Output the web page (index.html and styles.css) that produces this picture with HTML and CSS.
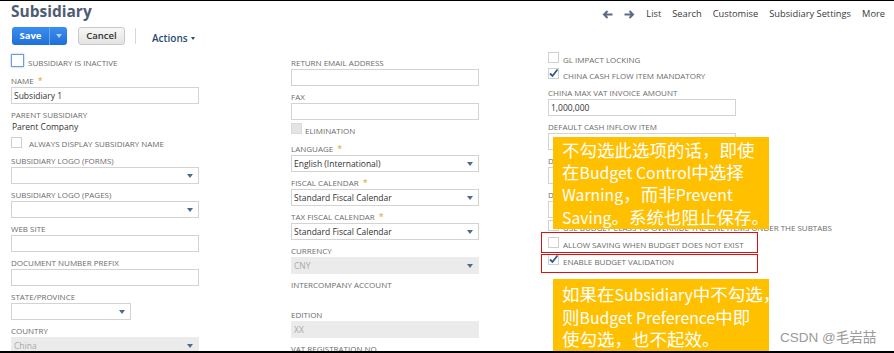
FILE: index.html
```html
<!DOCTYPE html>
<html lang="en">
<head>
    <meta charset="UTF-8">
    <title>Subsidiary</title>
    <link rel="stylesheet" href="styles.css">
</head>
<body>
<div class="page">
    <header class="title-bar">
        <h1>Subsidiary</h1>
        <nav class="record-nav">
            <svg class="nav-arrow" width="11" height="9" viewBox="0 0 11 9"><path d="M10.5 4.5H2 M5.5 1L2 4.5L5.5 8" fill="none" stroke="currentColor" stroke-width="2"/></svg>
            <svg class="nav-arrow" width="11" height="9" viewBox="0 0 11 9"><path d="M0.5 4.5H9 M5.5 1L9 4.5L5.5 8" fill="none" stroke="currentColor" stroke-width="2"/></svg>
            <a>List</a>
            <a>Search</a>
            <a>Customise</a>
            <a>Subsidiary Settings</a>
            <a>More</a>
        </nav>
    </header>

    <div class="toolbar">
        <div class="btn-save">
            <span class="btn-main">Save</span>
            <span class="btn-drop"><i class="tri-light"></i></span>
        </div>
        <div class="btn-cancel">Cancel</div>
        <div class="tool-sep"></div>
        <div class="actions">Actions<i class="tri-dark"></i></div>
    </div>

    <div class="form">
        <div class="col col-main">
            <div class="check check-inactive"><span class="box focus"></span>Subsidiary is inactive</div>
            <div class="field">
                <div class="label">Name<span class="req">*</span></div>
                <div class="input">Subsidiary 1</div>
            </div>
            <div class="label">Parent Subsidiary</div>
            <div class="value">Parent Company</div>
            <div class="check check-always"><span class="box"></span>Always display subsidiary name</div>
            <div class="field">
                <div class="label">Subsidiary logo (forms)</div>
                <div class="input"><span></span><i class="caret"></i></div>
            </div>
            <div class="field">
                <div class="label">Subsidiary logo (pages)</div>
                <div class="input"><span></span><i class="caret"></i></div>
            </div>
            <div class="field">
                <div class="label">Web site</div>
                <div class="input"></div>
            </div>
            <div class="field">
                <div class="label">Document number prefix</div>
                <div class="input"></div>
            </div>
            <div class="field">
                <div class="label">State/Province</div>
                <div class="input short"><span></span><i class="caret"></i></div>
            </div>
            <div class="field">
                <div class="label">Country</div>
                <div class="input disabled"><span>China</span><i class="caret"></i></div>
            </div>
        </div>

        <div class="col col-mid">
            <div class="field">
                <div class="label">Return email address</div>
                <div class="input"></div>
            </div>
            <div class="field tight">
                <div class="label">Fax</div>
                <div class="input"></div>
            </div>
            <div class="check check-elim"><span class="box disabled"></span>Elimination</div>
            <div class="field">
                <div class="label">Language<span class="req">*</span></div>
                <div class="input"><span>English (International)</span><i class="caret"></i></div>
            </div>
            <div class="field">
                <div class="label">Fiscal calendar<span class="req">*</span></div>
                <div class="input"><span>Standard Fiscal Calendar</span><i class="caret"></i></div>
            </div>
            <div class="field">
                <div class="label">Tax fiscal calendar<span class="req">*</span></div>
                <div class="input"><span>Standard Fiscal Calendar</span><i class="caret"></i></div>
            </div>
            <div class="field">
                <div class="label">Currency</div>
                <div class="input disabled"><span>CNY</span><i class="caret"></i></div>
            </div>
            <div class="field">
                <div class="label">Intercompany account</div>
                <div class="spacer"></div>
            </div>
            <div class="field">
                <div class="label">Edition</div>
                <div class="input disabled"><span>XX</span></div>
            </div>
            <div class="label">VAT registration no.</div>
        </div>

        <div class="col col-right">
            <div class="check"><span class="box"></span>GL impact locking</div>
            <div class="check check-gap">
                <span class="box"><svg width="11" height="11" viewBox="0 0 11 11"><path d="M2 5.5L4.5 8L9.5 1.5" fill="none" stroke="#2b5b94" stroke-width="1.8"/></svg></span>China cash flow item mandatory
            </div>
            <div class="field">
                <div class="label">China max VAT invoice amount</div>
                <div class="input">1,000,000</div>
            </div>
            <div class="field">
                <div class="label">Default cash inflow item</div>
                <div class="input"><span></span><i class="caret"></i></div>
            </div>
            <div class="field">
                <div class="label">Default cash outflow item</div>
                <div class="input"><span></span><i class="caret"></i></div>
            </div>
            <div class="field field-last">
                <div class="label">Default cash flow item for bank deposits</div>
                <div class="input"><span></span><i class="caret"></i></div>
            </div>
            <div class="check"><span class="box"></span>Use budget class to override the line items under the subtabs</div>
            <div class="check marked marked-first"><span class="box"></span>Allow saving when budget does not exist</div>
            <div class="check marked marked-second">
                <span class="box"><svg width="11" height="11" viewBox="0 0 11 11"><path d="M2 5.5L4.5 8L9.5 1.5" fill="none" stroke="#2b5b94" stroke-width="1.8"/></svg></span>Enable budget validation
            </div>
        </div>
    </div>

    <div class="note note-top">不勾选此选项的话，即使<br>在<span class="en">Budget Control</span>中选择<br><span class="en">Warning</span>，而非<span class="en">Prevent</span><br><span class="en">Saving</span>。系统也阻止保存。</div>
    <div class="note note-bottom">如果在<span class="en">Subsidiary</span>中不勾选，<br>则<span class="en">Budget Preference</span>中即<br>使勾选，也不起效。</div>
    <div class="watermark">CSDN @毛岩喆</div>
</div>
</body>
</html>
```

FILE: styles.css
```css
body {
    margin: 0;
    background: #fff;
    font-family: "Open Sans", "Noto Sans CJK SC", sans-serif;
}

.page {
    position: relative;
    height: 353px;
    box-sizing: border-box;
    border-top: 1px solid #000;
    border-bottom: 2px solid #000;
    overflow: hidden;
}

/* title + record navigation */
.title-bar {
    display: flex;
    justify-content: space-between;
    align-items: flex-start;
    height: 21px;
    padding: 0 9px 0 11px;
}

h1 {
    margin: 0;
    font-size: 15.5px;
    line-height: 21px;
    font-weight: 700;
    color: #4e5d74;
}

.record-nav {
    display: flex;
    align-items: center;
    gap: 11px;
    padding-top: 6px;
    font-size: 9.3px;
    line-height: 14px;
    color: #3a3a3a;
}

.nav-arrow {
    color: #5b6b84;
}

/* buttons */
.toolbar {
    display: flex;
    align-items: flex-start;
    height: 18px;
    margin-top: 5px;
    padding-left: 12px;
}

.btn-save {
    display: flex;
    width: 55px;
    height: 18px;
    border-radius: 3px;
    background: linear-gradient(#3b8ef0, #1f6fd8);
    color: #fff;
}

.btn-main {
    width: 37px;
    text-align: center;
    font-size: 9.5px;
    font-weight: 700;
    line-height: 18px;
}

.btn-drop {
    flex: 1;
    display: flex;
    align-items: center;
    justify-content: center;
    border-left: 1px solid #6aa6ec;
}

.tri-light {
    border-left: 3px solid transparent;
    border-right: 3px solid transparent;
    border-top: 4px solid #b7d3f6;
}

.btn-cancel {
    margin-left: 11px;
    width: 47px;
    height: 18px;
    box-sizing: border-box;
    border: 1px solid #c9c9c9;
    border-radius: 3px;
    background: linear-gradient(#f7f7f7, #e3e3e3);
    font-size: 9.5px;
    font-weight: 600;
    line-height: 16px;
    text-align: center;
    color: #333;
}

.tool-sep {
    width: 1px;
    height: 16px;
    margin: 1px 0 0 10px;
    background: #d8d8d8;
}

.actions {
    display: flex;
    align-items: center;
    margin-left: 16px;
    padding-top: 4px;
    font-size: 10px;
    font-weight: 600;
    line-height: 14px;
    color: #2a4a74;
}

.tri-dark {
    margin-left: 3px;
    border-left: 2.5px solid transparent;
    border-right: 2.5px solid transparent;
    border-top: 3px solid #2a4a74;
}

/* form */
.form {
    display: grid;
    grid-template-columns: 280px 257px 1fr;
    margin-top: 7px;
    padding-left: 11px;
}

.col-main {
    padding-top: 2px;
}

.col-mid {
    padding-top: 5px;
}

.field {
    width: 188px;
    margin-bottom: 5px;
}

.field.tight {
    margin-bottom: 0;
}

.field-last {
    margin-bottom: 2px;
}

.label {
    height: 12px;
    line-height: 12px;
    font-size: 8px;
    color: #6b6b6b;
    text-transform: uppercase;
    white-space: nowrap;
}

.req {
    margin-left: 4px;
    font-size: 9px;
    color: #e59e2c;
}

.input {
    display: flex;
    align-items: center;
    justify-content: space-between;
    height: 17px;
    box-sizing: border-box;
    padding: 0 5px 0 2px;
    border: 1px solid #d3d3d3;
    background: #fff;
    font-size: 8.5px;
    color: #333;
    white-space: nowrap;
}

.input.short {
    width: 120px;
}

.input.disabled {
    background: #ebebeb;
    border-color: #ebebeb;
    color: #a9a9a9;
}

.caret {
    border-left: 3.5px solid transparent;
    border-right: 3.5px solid transparent;
    border-top: 4px solid #4c6b92;
}

.spacer {
    height: 13px;
}

.value {
    margin-bottom: 4px;
    padding-left: 1px;
    font-size: 8.5px;
    line-height: 12px;
    color: #333;
}

/* checkboxes */
.check {
    position: relative;
    display: flex;
    align-items: flex-start;
    gap: 4px;
    width: 188px;
    height: 16px;
    font-size: 8px;
    line-height: 16px;
    color: #6b6b6b;
    text-transform: uppercase;
    white-space: nowrap;
}

.check-inactive {
    height: 18px;
    line-height: 18px;
    margin-bottom: 3px;
}

.check-always {
    height: 14px;
    line-height: 14px;
    gap: 7px;
    margin-bottom: 4px;
}

.check-elim {
    gap: 3px;
    margin-top: 3px;
    margin-bottom: 4px;
}

.check-gap {
    margin-bottom: 3px;
}

.box {
    flex: none;
    width: 11px;
    height: 11px;
    box-sizing: border-box;
    border: 1px solid #cfcfcf;
    background: #fff;
}

.box svg {
    display: block;
    margin: -1px;
}

.box.focus {
    width: 13px;
    height: 13px;
    border-color: #6f9fd8;
    box-shadow: 0 0 2px #8db6e6;
}

.box.disabled {
    background: #e4e4e4;
    border-color: #dadada;
}

.marked {
    margin-top: 1px;
}

.marked::after {
    content: "";
    position: absolute;
    left: -7px;
    right: -22px;
    border: 1px solid #e01010;
}

.marked-first::after {
    top: -5px;
    bottom: 0;
}

.marked-second::after {
    top: 0;
    bottom: -3px;
}

/* callouts laid over the form */
.note {
    position: absolute;
    left: 553px;
    width: 216px;
    box-sizing: border-box;
    padding-left: 9px;
    background: #ffc000;
    color: #fff;
    font-family: "Noto Sans CJK SC", sans-serif;
    font-size: 17.5px;
    line-height: 21.5px;
    white-space: nowrap;
}

.note .en {
    font-size: 15.8px;
}

.note-top {
    top: 136px;
    height: 92px;
    padding-top: 2px;
}

.note-bottom {
    top: 278px;
    height: 80px;
    padding-top: 4px;
}

.watermark {
    position: absolute;
    left: 780px;
    top: 328px;
    font-family: "Liberation Sans", "Noto Sans CJK SC", sans-serif;
    font-size: 13.5px;
    line-height: 18px;
    color: #9a9a9a;
}
```
